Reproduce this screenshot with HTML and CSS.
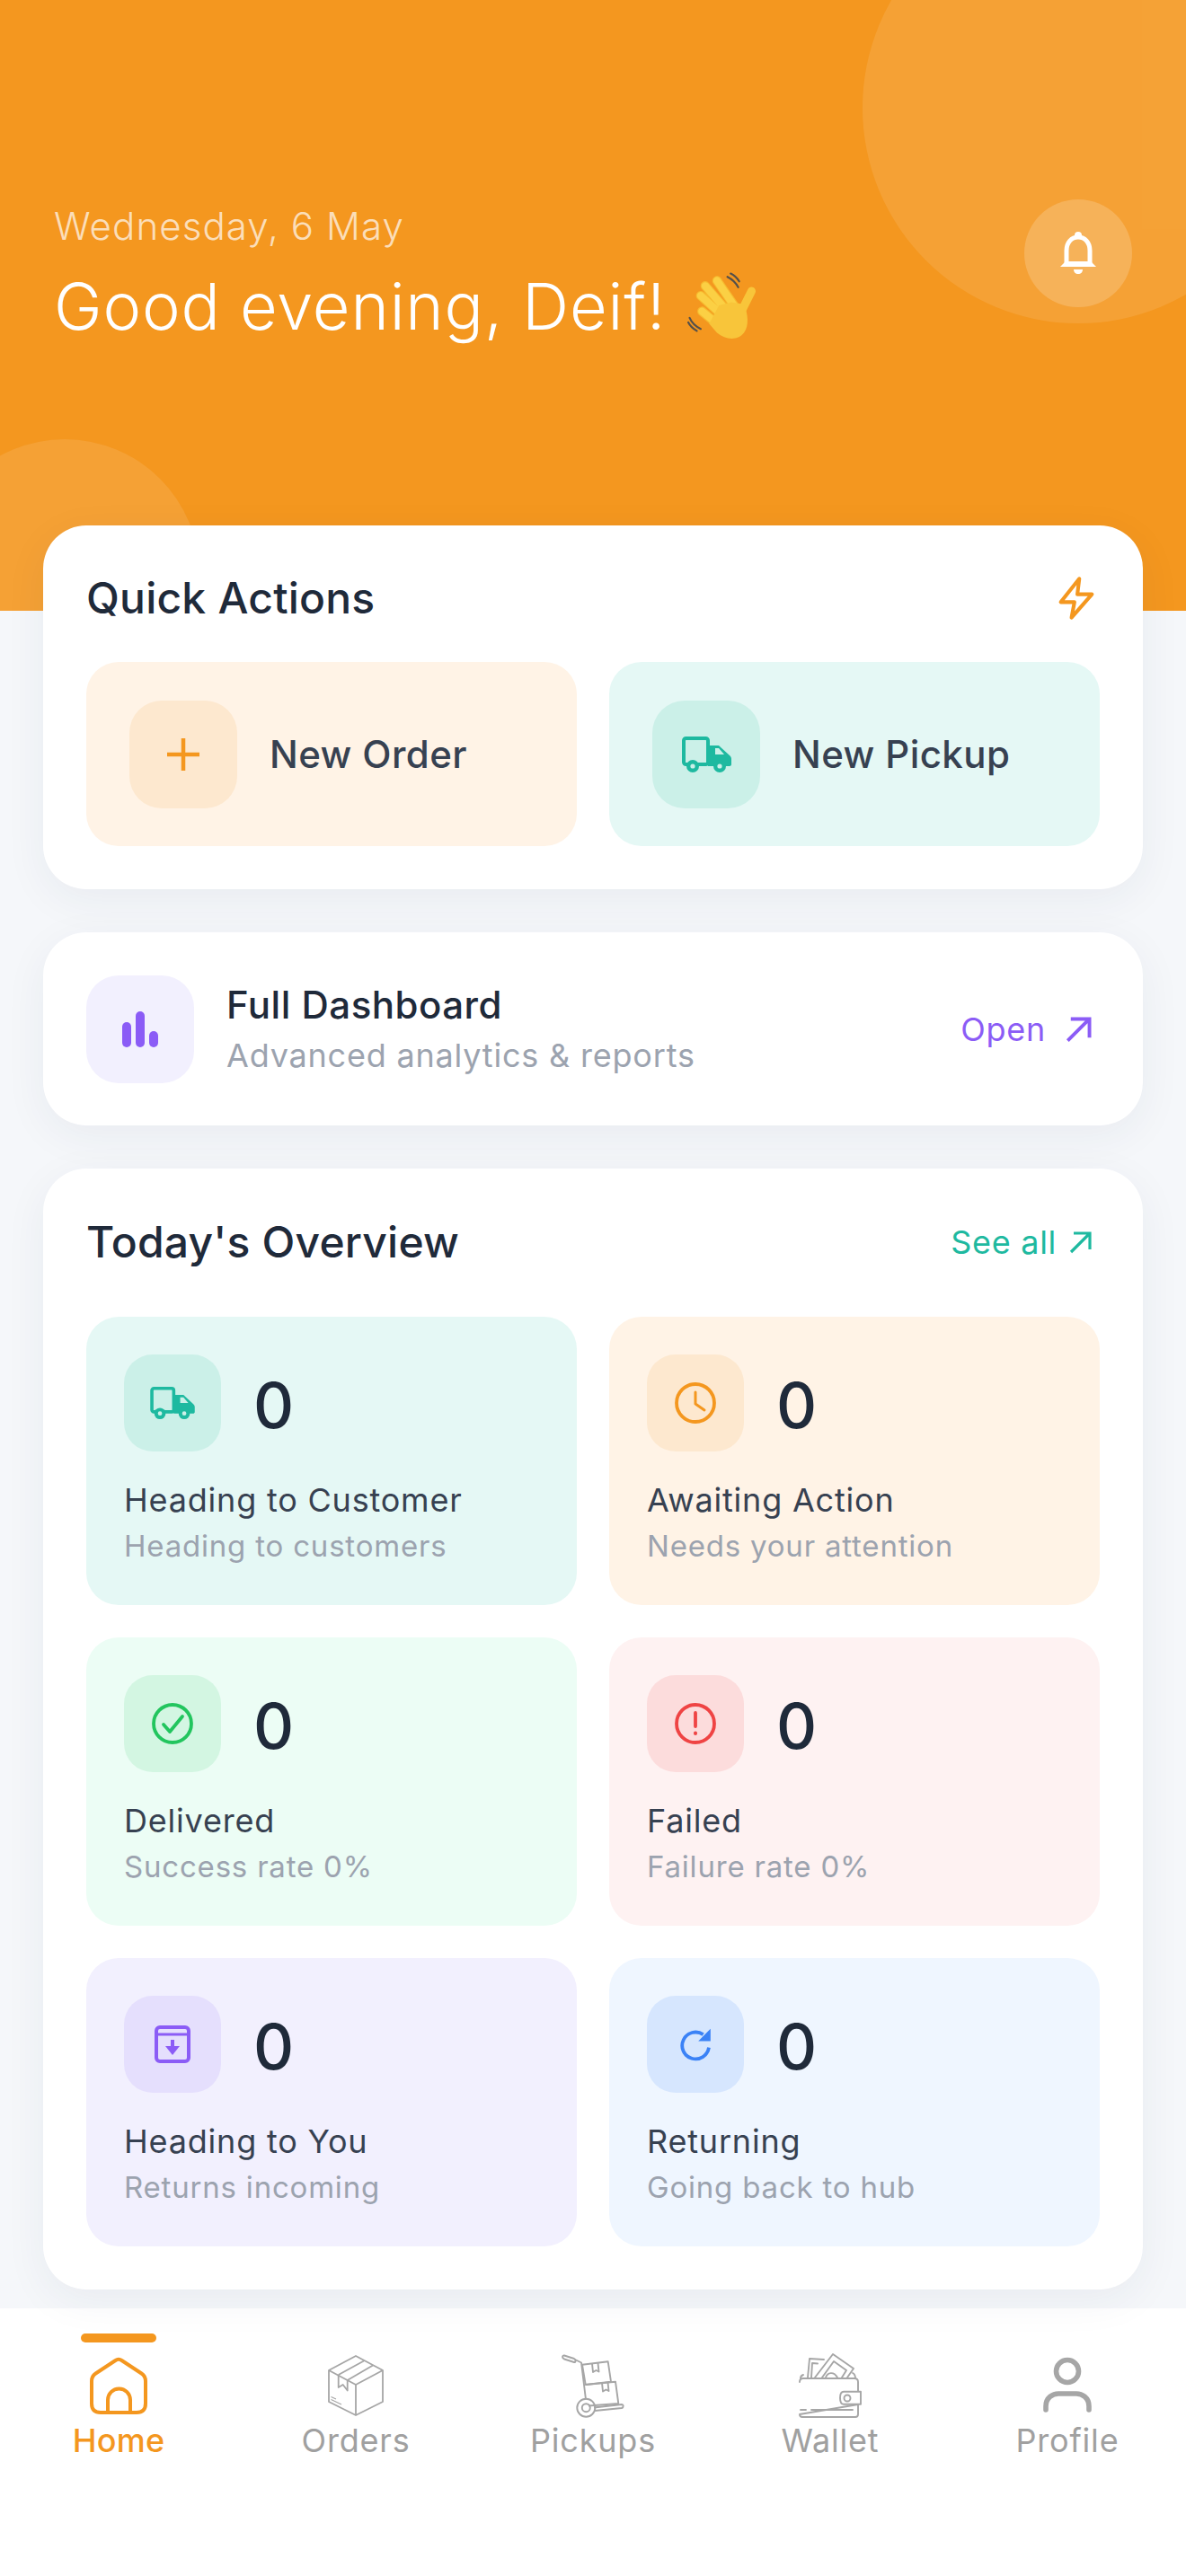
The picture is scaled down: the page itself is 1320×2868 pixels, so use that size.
FILE: index.html
```html
<!DOCTYPE html>
<html lang="en">

<head>
    <title>Home</title>
    <meta charset="utf-8">
    <meta name="viewport" content="width=device-width, initial-scale=1">
    <link rel="stylesheet" href="styles.css">
</head>

<body>
    <header class="hero">
        <div class="hero-text">
            <p class="hero-date">Wednesday, 6 May</p>
            <h1 class="hero-greeting">Good evening, Deif!
                <svg class="wave" viewBox="195 75 215 215" fill="none" stroke-linecap="round">
                    <path d="M318 92c16 8 26 18 33 32M328 82c12 6 20 14 26 24M202 218c6 14 18 26 34 34M198 232c6 12 16 20 26 26" stroke="#55504a" stroke-width="6" />
                    <path d="M286 104 338 180M250 120 316 196M236 150 304 212M240 198 296 244" stroke="#f6b92e" stroke-width="29" />
                    <path d="M286 104 338 180M250 120 316 196M236 150 304 212M240 198 296 244" stroke="#fbd044" stroke-width="23" />
                    <path d="M392 136 362 196" stroke="#f8c53a" stroke-width="25" />
                    <path d="M292 180 330 170 368 176C382 206 384 240 370 262 352 288 314 288 286 264L262 236z" fill="#f8c53a" />
                </svg>
            </h1>
        </div>
        <button class="bell">
            <svg viewBox="0 0 40 48" width="40" height="48" fill="none">
                <circle cx="20" cy="4" r="4" fill="#fff" />
                <path d="M7 36V21C7 12 12.500 6 20 6s13 6 13 15v15" stroke="#fff" stroke-width="5" />
                <path d="M0 39l6-6h28l6 6z" fill="#fff" />
                <path d="M15 42h10c0 3-2 5-5 5s-5-2-5-5z" fill="#fff" />
            </svg>
        </button>
    </header>

    <main class="content">
        <!-- Quick actions -->
        <section class="card card-actions">
            <div class="card-head">
                <h2>Quick Actions</h2>
                <svg class="bolt" viewBox="0 0 24 24" width="52" height="52" fill="none" stroke="#f4971f" stroke-width="1.900" stroke-linejoin="round" stroke-linecap="round">
                    <path d="M13.500 2 4 14h7l-1.500 8L20 10h-7.500z" />
                </svg>
            </div>
            <div class="grid">
                <a class="action tint-orange">
                    <span class="icon-box">
                        <svg viewBox="0 0 36 36" width="36" height="36" fill="none" stroke="#f4971f" stroke-width="4.500">
                            <path d="M18 0v36M0 18h36" />
                        </svg>
                    </span>
                    New Order
                </a>
                <a class="action tint-teal">
                    <span class="icon-box">
                        <svg viewBox="0 0 55 40" width="55" height="40" fill="none">
                            <rect x="2" y="2" width="27" height="29" rx="2.500" stroke="#1eb9a0" stroke-width="4" />
                            <path d="M29 10h11c1 0 2 .5 2.500 1.500L53 21c1.500 1.500 2 2.500 2 4v6c0 1-1 2-2 2H29z" fill="#1eb9a0" />
                            <path d="M37 13h4l6 7H37z" fill="#cbf0e8" />
                            <circle cx="12" cy="33" r="7" fill="#1eb9a0" />
                            <circle cx="12" cy="33" r="2.600" fill="#cbf0e8" />
                            <circle cx="42" cy="33" r="7" fill="#1eb9a0" />
                            <circle cx="42" cy="33" r="2.600" fill="#cbf0e8" />
                        </svg>
                    </span>
                    New Pickup
                </a>
            </div>
        </section>

        <!-- Dashboard link -->
        <section class="card card-dashboard">
            <span class="icon-box icon-box-purple">
                <svg viewBox="0 0 40 40" width="40" height="40" fill="#8b5cf6">
                    <rect x="0" y="12" width="10" height="28" rx="5" />
                    <rect x="15" y="0" width="10" height="40" rx="5" />
                    <rect x="30" y="22" width="10" height="18" rx="5" />
                </svg>
            </span>
            <div class="dashboard-text">
                <h3>Full Dashboard</h3>
                <p>Advanced analytics &amp; reports</p>
            </div>
            <a class="link link-purple">Open
                <svg viewBox="0 0 26 26" width="30" height="30" fill="none" stroke="#8b5cf6" stroke-width="3.400">
                    <path d="M2 24 23 3M5 3h18v18" />
                </svg>
            </a>
        </section>

        <!-- Overview -->
        <section class="card card-overview">
            <div class="card-head card-head-overview">
                <h2>Today's Overview</h2>
                <a class="link link-teal">See all
                    <svg viewBox="0 0 26 26" width="26" height="26" fill="none" stroke="#1eb9a0" stroke-width="3.200">
                        <path d="M2 24 23 3M5 3h18v18" />
                    </svg>
                </a>
            </div>
            <div class="grid">
                <div class="stat tint-teal">
                    <div class="stat-top">
                        <span class="icon-box">
                            <svg viewBox="0 0 55 40" width="50" height="36" fill="none">
                                <rect x="2" y="2" width="27" height="29" rx="2.500" stroke="#1eb9a0" stroke-width="4" />
                                <path d="M29 10h11c1 0 2 .5 2.500 1.500L53 21c1.500 1.500 2 2.500 2 4v6c0 1-1 2-2 2H29z" fill="#1eb9a0" />
                                <path d="M37 13h4l6 7H37z" fill="#cbf0e8" />
                                <circle cx="12" cy="33" r="7" fill="#1eb9a0" />
                                <circle cx="12" cy="33" r="2.600" fill="#cbf0e8" />
                                <circle cx="42" cy="33" r="7" fill="#1eb9a0" />
                                <circle cx="42" cy="33" r="2.600" fill="#cbf0e8" />
                            </svg>
                        </span>
                        <span class="stat-value">0</span>
                    </div>
                    <p class="stat-label">Heading to Customer</p>
                    <p class="stat-sub">Heading to customers</p>
                </div>
                <div class="stat tint-orange">
                    <div class="stat-top">
                        <span class="icon-box">
                            <svg viewBox="0 0 46 46" width="46" height="46" fill="none" stroke="#f4971f" stroke-width="3.800" stroke-linecap="round" stroke-linejoin="round">
                                <circle cx="23" cy="23" r="21" />
                                <path d="M23 11v13l10 7" stroke-width="3" />
                            </svg>
                        </span>
                        <span class="stat-value">0</span>
                    </div>
                    <p class="stat-label">Awaiting Action</p>
                    <p class="stat-sub">Needs your attention</p>
                </div>
                <div class="stat tint-green">
                    <div class="stat-top">
                        <span class="icon-box">
                            <svg viewBox="0 0 46 46" width="46" height="46" fill="none" stroke="#22c55e" stroke-width="3.800" stroke-linecap="round" stroke-linejoin="round">
                                <circle cx="23" cy="23" r="21" />
                                <path d="m13 24 7 8 14-17" />
                            </svg>
                        </span>
                        <span class="stat-value">0</span>
                    </div>
                    <p class="stat-label">Delivered</p>
                    <p class="stat-sub">Success rate 0%</p>
                </div>
                <div class="stat tint-red">
                    <div class="stat-top">
                        <span class="icon-box">
                            <svg viewBox="0 0 46 46" width="46" height="46" fill="none" stroke="#ef4444" stroke-width="3.800" stroke-linecap="round">
                                <circle cx="23" cy="23" r="21" />
                                <path d="M23 11v15" />
                                <path d="M23 33.500v.5" stroke-width="4" />
                            </svg>
                        </span>
                        <span class="stat-value">0</span>
                    </div>
                    <p class="stat-label">Failed</p>
                    <p class="stat-sub">Failure rate 0%</p>
                </div>
                <div class="stat tint-purple">
                    <div class="stat-top">
                        <span class="icon-box">
                            <svg viewBox="0 0 40 42" width="40" height="42" fill="none" stroke="#8b5cf6" stroke-width="4" stroke-linejoin="round">
                                <rect x="2" y="2" width="36" height="38" rx="4" />
                                <path d="M2 10h36" stroke-width="3" />
                                <path d="M20 16v10" />
                                <path d="M12 23h16l-8 10z" fill="#8b5cf6" stroke="none" />
                            </svg>
                        </span>
                        <span class="stat-value">0</span>
                    </div>
                    <p class="stat-label">Heading to You</p>
                    <p class="stat-sub">Returns incoming</p>
                </div>
                <div class="stat tint-blue">
                    <div class="stat-top">
                        <span class="icon-box">
                            <svg viewBox="0 0 40 42" width="37" height="38" fill="none" stroke="#3b82f6" stroke-width="4.200">
                                <path d="M29 9A16.500 16.500 0 1 0 36 25" />
                                <path d="M38 2v15H23z" fill="#3b82f6" stroke="none" />
                            </svg>
                        </span>
                        <span class="stat-value">0</span>
                    </div>
                    <p class="stat-label">Returning</p>
                    <p class="stat-sub">Going back to hub</p>
                </div>
            </div>
        </section>
    </main>

    <nav class="tabbar">
        <a class="tab tab-active">
            <span class="tab-bar"></span>
            <svg viewBox="0 0 64 64" width="64" height="64" fill="none" stroke="#f4971f" stroke-width="4">
                <path d="M28.500 4 6.500 18.500Q2 21.500 2 27v25q0 10 10 10h40q10 0 10-10V27q0-5.500-4.500-8.500L35.500 4q-3.500-2.500-7 0z" />
                <path d="M20 62V48a12.500 12.500 0 0 1 25 0v14" />
            </svg>
            <span>Home</span>
        </a>
        <a class="tab">
            <svg viewBox="0 0 62 68" width="62" height="68" fill="none" stroke="#a6a6a6" stroke-width="1.800" stroke-linejoin="round">
                <path d="M31 1 61 17v35L31 67 1 52V17z" />
                <path d="M1 17l30 16 30-16M31 33v34" />
                <path d="M11.700 22 40 6.500M21.700 28 50 11.500" />
                <path d="M11.700 22v14l5-3 5 6.500V28" />
                <path d="M3.500 46.500 9 49M3.500 49.500 15 55" stroke-width="1.200" />
            </svg>
            <span>Orders</span>
        </a>
        <a class="tab">
            <svg viewBox="0 0 70 72" width="70" height="72" fill="none" stroke="#a6a6a6" stroke-width="1.900" stroke-linejoin="round">
                <path d="M3 2.500 14 6c2 1 2 4 0 4L3 6.500C0 5 1 2 3 2.500z" />
                <path d="M15 7l7 3.500 5 41" />
                <circle cx="27.300" cy="60.700" r="10" />
                <circle cx="27.300" cy="60.700" r="4.500" />
                <path d="m37 64 30-3c2.500-1 2-4 0-4l-31 3.500" />
                <path d="m23 12.700 28.700-3.400 3.300 22.400-28.300 3.300z" />
                <path d="M26.700 35 60 31.700 63.300 56 30 58.500" />
                <path d="m34 11.500 1 9.500 3.500-2 3 1.500-1-9.500M45 33l1 9.500 3.500-2 3 1.500-1-9.500" />
            </svg>
            <span>Pickups</span>
        </a>
        <a class="tab">
            <svg viewBox="0 0 70 72" width="70" height="72" fill="none" stroke="#a6a6a6" stroke-width="1.900" stroke-linejoin="round" stroke-linecap="round">
                <path d="M1 32q0-4 4-4h57q4 0 4 4v10M66 57v11q0 3-3 3H4q-3 0-3-3z" />
                <path d="M50 42.700h19v14H50q-4 0-4-7t4-7z" />
                <circle cx="54" cy="50" r="3.500" />
                <path d="M2 63h6M14 63h46" />
                <path d="M2 28q0-3 3-4" />
                <path d="M10 27l2-21 16 1M14 27l1-16 6 .5" />
                <path d="M18 27 38 1l23 16-7 10M26 27 39 9l14 10-5 8" />
                <path d="M30 27c2-6 9-7 13 0" />
                <path d="M60 22c2 1 3 3 3 6" />
            </svg>
            <span>Wallet</span>
        </a>
        <a class="tab">
            <svg viewBox="0 0 56 62" width="56" height="62" fill="none" stroke="#a6a6a6" stroke-width="5.600" stroke-linecap="round">
                <circle cx="28" cy="15" r="12.500" />
                <path d="M4 58V54C4 44 12 40 18 40h20c6 0 14 4 14 14v4" />
            </svg>
            <span>Profile</span>
        </a>
    </nav>
</body>

</html>
```

FILE: styles.css
```css
* {
    box-sizing: border-box;
    margin: 0;
}

body {
    display: flex;
    flex-direction: column;
    height: 100vh;
    font-family: Inter, "Open Sans", sans-serif;
    background: #f5f7fa;
    color: #1f2a3a;
}

/* Orange header */
.hero {
    position: relative;
    flex: none;
    height: 680px;
    background: #f4971f;
    overflow: hidden;
    display: flex;
    justify-content: space-between;
    padding: 222px 60px 0;
}

.hero::before {
    content: "";
    position: absolute;
    left: 960px;
    top: -120px;
    width: 480px;
    height: 480px;
    border-radius: 50%;
    background: rgba(255, 255, 255, 0.1);
}

.hero::after {
    content: "";
    position: absolute;
    left: -78px;
    top: 489px;
    width: 300px;
    height: 300px;
    border-radius: 50%;
    background: rgba(255, 255, 255, 0.1);
}

.hero-date {
    font-size: 42px;
    line-height: 60px;
    color: rgba(255, 255, 255, 0.7);
    letter-spacing: 1.1px;
    font-weight: 300;
}

.hero-greeting {
    margin-top: 15px;
    font-size: 72px;
    line-height: 88px;
    font-weight: 300;
    letter-spacing: 0.9px;
    color: #fff;
    display: flex;
    align-items: center;
    gap: 24px;
}

.wave {
    width: 78px;
    height: 78px;
}

.bell {
    position: relative;
    z-index: 1;
    width: 120px;
    height: 120px;
    border: 0;
    padding: 0;
    border-radius: 50%;
    background: rgba(255, 255, 255, 0.18);
    display: flex;
    align-items: center;
    justify-content: center;
}

/* Cards */
.content {
    position: relative;
    flex: none;
    margin-top: -95px;
    padding: 0 48px 21px;
    display: flex;
    flex-direction: column;
    gap: 48px;
}

.card {
    background: #fff;
    border-radius: 48px;
    box-shadow: 0 12px 48px rgba(40, 50, 80, 0.06);
    padding: 48px;
}

.card-head {
    display: flex;
    justify-content: space-between;
    align-items: center;
    height: 66px;
    margin-bottom: 38px;
}

.card-head h2 {
    font-size: 48px;
    line-height: 66px;
    font-weight: 500;
    letter-spacing: 0.2px;
}

.card-head-overview {
    margin-top: 1px;
    margin-bottom: 50px;
}

.grid {
    display: grid;
    grid-template-columns: 1fr 1fr;
    gap: 36px;
}

.icon-box {
    flex: none;
    display: flex;
    align-items: center;
    justify-content: center;
    width: 120px;
    height: 120px;
    border-radius: 36px;
}

.tint-orange {
    background: #fff3e6;
}

.tint-orange .icon-box {
    background: #fde8cf;
}

.tint-teal {
    background: #e5f8f5;
}

.tint-teal .icon-box {
    background: #cbf0e8;
}

.tint-green {
    background: #ecfdf5;
}

.tint-green .icon-box {
    background: #d3f6e2;
}

.tint-red {
    background: #fef2f2;
}

.tint-red .icon-box {
    background: #fcdcdc;
}

.tint-purple {
    background: #f2f0fe;
}

.tint-purple .icon-box {
    background: #e5dffd;
}

.tint-blue {
    background: #eff6ff;
}

.tint-blue .icon-box {
    background: #d6e6fe;
}

/* Quick actions */
.action {
    display: flex;
    align-items: center;
    gap: 36px;
    height: 205px;
    padding: 0 48px;
    border-radius: 36px;
    font-size: 42px;
    font-weight: 500;
    letter-spacing: 0.4px;
    color: #374151;
}

/* Dashboard link */
.card-dashboard {
    display: flex;
    align-items: center;
    gap: 36px;
    height: 215px;
}

.icon-box-purple {
    background: #f2f0fe;
}

.dashboard-text {
    flex: 1;
}

.dashboard-text h3 {
    font-size: 42px;
    line-height: 56px;
    font-weight: 500;
    letter-spacing: 0.5px;
}

.dashboard-text p {
    font-size: 36px;
    line-height: 50px;
    color: #9ca3af;
    letter-spacing: 0.8px;
    margin-top: 3px;
}

.link {
    display: flex;
    align-items: center;
    font-size: 36px;
    letter-spacing: 0.7px;
}

.link-purple {
    color: #8b5cf6;
    gap: 22px;
    padding-right: 8px;
}

.link-teal {
    color: #1eb9a0;
    gap: 14px;
    padding-right: 8px;
}

/* Overview tiles */
.stat {
    height: 321px;
    padding: 42px;
    border-radius: 36px;
}

.stat-top {
    display: flex;
    align-items: center;
    gap: 36px;
}

.stat .icon-box {
    width: 108px;
    height: 108px;
    border-radius: 32px;
}

.stat-value {
    padding-top: 5px;
    font-size: 70px;
    line-height: 80px;
    font-weight: 500;
}

.stat-label {
    margin-top: 30px;
    font-size: 36px;
    line-height: 48px;
    color: #374151;
    letter-spacing: 0.8px;
}

.stat-sub {
    margin-top: 6px;
    font-size: 33px;
    line-height: 42px;
    color: #9ca3af;
    letter-spacing: 0.8px;
}

/* Bottom navigation */
.tabbar {
    flex: 1;
    display: grid;
    grid-template-columns: repeat(5, 1fr);
    padding-top: 50px;
    background: #fff;
}

.tab {
    position: relative;
    display: flex;
    flex-direction: column;
    align-items: center;
    font-size: 36px;
    line-height: 50px;
    letter-spacing: 0.8px;
    color: #a0a0a0;
}

.tab svg {
    height: 72px;
}

.tab-active {
    color: #f4971f;
    font-weight: 500;
    letter-spacing: 0.2px;
}

.tab-bar {
    position: absolute;
    top: -22px;
    width: 84px;
    height: 10px;
    border-radius: 5px;
    background: #f4971f;
}
```
